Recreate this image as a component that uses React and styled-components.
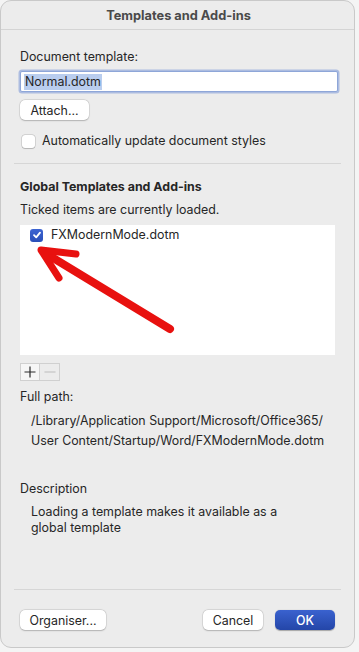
import styled, { createGlobalStyle } from "styled-components";

const Global = createGlobalStyle`
  html, body {
    margin: 0;
    padding: 0;
    background: #f4f4f4;
  }
  body {
    font-family: Inter, "Noto Sans", "Liberation Sans", sans-serif;
    font-size: 12.4px;
    color: #262626;
  }
`;

const Check = ({ on }) => (
  <Box $on={on}>
    {on && (
      <svg width="10" height="10" viewBox="0 0 10 10">
        <path d="M2 5.2 L4.2 7.4 L8 2.6" fill="none" stroke="#fff" strokeWidth="1.8" strokeLinecap="round" strokeLinejoin="round" />
      </svg>
    )}
  </Box>
);

// red annotation arrow, in list coordinates
const Arrow = () => (
  <ArrowSvg width="315" height="129" viewBox="0 0 315 129">
    <g stroke="#e8110f" strokeLinecap="round" strokeLinejoin="round" fill="none">
      <path d="M25 28 L150 104" strokeWidth="8" />
      <path d="M56 29 L21 25 L39 53" strokeWidth="7" />
    </g>
  </ArrowSvg>
);

const App = () => {
  return (
    <Window>
      <Global />
      <TitleBar>Templates and Add-ins</TitleBar>
      <Body>
        <Label>Document template:</Label>
        <Input>
          <Selected>Normal.dotm</Selected>
        </Input>
        <Button $w={69} style={{ marginTop: 8 }}>Attach...</Button>
        <CheckRow>
          <Check />
          <span>Automatically update document styles</span>
        </CheckRow>
        <Separator $top={14} />
        <Heading>Global Templates and Add-ins</Heading>
        <Label $top={7}>Ticked items are currently loaded.</Label>
        <List>
          <ListItem>
            <Check on />
            <span>FXModernMode.dotm</span>
          </ListItem>
          <Arrow />
        </List>
        <PlusMinus>
          <PMButton>
            <svg width="12" height="12" viewBox="0 0 12 12">
              <path d="M6 0.5 V11.5 M0.5 6 H11.5" stroke="#2a2a2a" strokeWidth="1.2" />
            </svg>
          </PMButton>
          <PMButton $disabled>
            <svg width="12" height="12" viewBox="0 0 12 12">
              <path d="M0.5 6 H11.5" stroke="#c4c4c4" strokeWidth="1.2" />
            </svg>
          </PMButton>
        </PlusMinus>
        <Label $top={8}>Full path:</Label>
        <Indented $lh={20} $top={6}>
          /Library/Application Support/Microsoft/Office365/
          <br />
          User Content/Startup/Word/FXModernMode.dotm
        </Indented>
        <Label $top={30}>Description</Label>
        <Indented $lh={16} $top={7}>
          Loading a template makes it available as a
          <br />
          global template
        </Indented>
        <Separator $top={53} />
        <Footer>
          <Button $w={86}>Organiser...</Button>
          <Right>
            <Button $w={60}>Cancel</Button>
            <Button $w={60} $primary>OK</Button>
          </Right>
        </Footer>
      </Body>
    </Window>
  );
};

export default App;

const Window = styled.div`
  box-sizing: border-box;
  width: 355px;
  height: 648px;
  background: #ececec;
  border: 1px solid #c9c9c9;
  border-radius: 11px;
  overflow: hidden;
  display: flex;
  flex-direction: column;
`;

const TitleBar = styled.div`
  flex-shrink: 0;
  height: 28px;
  border-bottom: 1px solid #d4d4d4;
  display: flex;
  align-items: center;
  justify-content: center;
  font-weight: 700;
  font-size: 12.8px;
  color: #4a4a4a;
  padding-left: 2px;
`;

const Body = styled.div`
  padding: 19px 19px 0 19px;
  display: flex;
  flex-direction: column;
  align-items: flex-start;
`;

const Label = styled.div`
  line-height: 16px;
  white-space: nowrap;
  margin-top: ${(p) => p.$top || 0}px;
`;

const Heading = styled.div`
  line-height: 16px;
  font-weight: 700;
  margin-top: 15px;
`;

const Input = styled.div`
  box-sizing: border-box;
  margin-top: 6px;
  width: 318px;
  height: 21px;
  background: #fff;
  border: 1px solid #8ea6d8;
  box-shadow: 0 0 0 1.5px rgba(120, 150, 215, 0.55);
  border-radius: 2px;
  display: flex;
  align-items: center;
  padding-left: 3px;
`;

const Selected = styled.span`
  background: #b9cdee;
  line-height: 16px;
  padding: 0 1px;
`;

const Button = styled.div`
  box-sizing: border-box;
  flex-shrink: 0;
  width: ${(p) => p.$w}px;
  height: 20px;
  border-radius: 5px;
  display: flex;
  align-items: center;
  justify-content: center;
  background: ${(p) => (p.$primary ? "linear-gradient(#3a62cf, #2446a8)" : "#fff")};
  color: ${(p) => (p.$primary ? "#fff" : "#262626")};
  box-shadow: ${(p) =>
    p.$primary
      ? "0 0.5px 1px rgba(0,0,0,0.3)"
      : "0 0 0 0.5px rgba(0,0,0,0.12), 0 0.5px 1.5px rgba(0,0,0,0.2)"};
  font-weight: ${(p) => (p.$primary ? 500 : 400)};
`;

const Box = styled.div`
  box-sizing: border-box;
  width: 13px;
  height: 13px;
  border-radius: 3px;
  flex-shrink: 0;
  display: flex;
  align-items: center;
  justify-content: center;
  background: ${(p) => (p.$on ? "linear-gradient(#3c64d2, #2a4fb8)" : "#fff")};
  box-shadow: ${(p) => (p.$on ? "none" : "0 0 0 0.5px rgba(0,0,0,0.2), 0 0.5px 1px rgba(0,0,0,0.15)")};
`;

const CheckRow = styled.div`
  margin-top: 13px;
  margin-left: 2px;
  display: flex;
  align-items: center;
  gap: 7px;
  line-height: 16px;
`;

const Separator = styled.div`
  align-self: stretch;
  margin: ${(p) => p.$top}px -6px 0 -6px;
  height: 1px;
  background: #d6d6d6;
`;

const List = styled.div`
  position: relative;
  box-sizing: border-box;
  flex-shrink: 0;
  margin-top: 7px;
  width: 315px;
  height: 130px;
  background: #fff;
  padding: 2px 0 0 10px;
`;

const ListItem = styled.div`
  display: flex;
  align-items: center;
  gap: 8px;
  line-height: 16px;
`;

const ArrowSvg = styled.svg`
  position: absolute;
  left: 0;
  top: 0;
  overflow: visible;
`;

const PlusMinus = styled.div`
  display: flex;
  margin-top: 8px;
`;

const PMButton = styled.div`
  box-sizing: border-box;
  width: 20px;
  height: 18px;
  display: flex;
  align-items: center;
  justify-content: center;
  background: ${(p) => (p.$disabled ? "#ececec" : "#f6f6f6")};
  border: 1px solid #d0d0d0;
  border-left: ${(p) => (p.$disabled ? "none" : "1px solid #d0d0d0")};
`;

const Indented = styled.div`
  margin-top: ${(p) => p.$top}px;
  padding-left: 11px;
  white-space: nowrap;
  line-height: ${(p) => p.$lh}px;
`;

const Footer = styled.div`
  align-self: stretch;
  margin-top: 20px;
  display: flex;
  justify-content: space-between;
`;

const Right = styled.div`
  display: flex;
  gap: 12px;
`;
